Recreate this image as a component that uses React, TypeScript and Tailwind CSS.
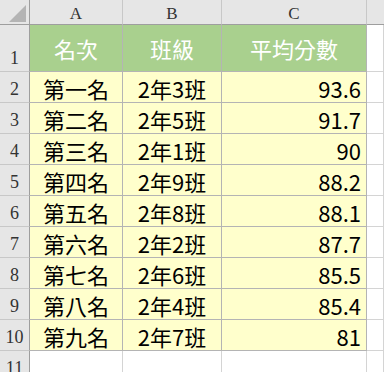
const rows = [
  { rank: "第一名", cls: "2年3班", score: "93.6" },
  { rank: "第二名", cls: "2年5班", score: "91.7" },
  { rank: "第三名", cls: "2年1班", score: "90" },
  { rank: "第四名", cls: "2年9班", score: "88.2" },
  { rank: "第五名", cls: "2年8班", score: "88.1" },
  { rank: "第六名", cls: "2年2班", score: "87.7" },
  { rank: "第七名", cls: "2年6班", score: "85.5" },
  { rank: "第八名", cls: "2年4班", score: "85.4" },
  { rank: "第九名", cls: "2年7班", score: "81" },
];

const serif = "font-['Liberation_Serif',serif]";
const cjk = "font-['Noto_Sans_CJK_TC',sans-serif]";

const colHead = `flex items-center justify-center border-r border-b border-r-[#c8c8c8] border-b-[#9e9e9e] bg-[#e6e6e6] pt-[3px] text-[17px] leading-none text-[#333] ${serif}`;
const rowHead = `flex items-end justify-center border-r border-b border-r-[#9e9e9e] border-b-[#c8c8c8] bg-[#e6e6e6] pb-[4px] text-[18px] leading-none text-[#333] ${serif}`;
const greenCell = `flex items-center justify-center border-r border-b border-[#b4b4b4] bg-[#a9d08e] text-[22px] leading-none text-white ${cjk}`;
const yellowCell = `flex items-center border-r border-b border-[#b4b4b4] bg-[#ffffcc] text-[22px] leading-none text-black ${cjk}`;
const blank = "border-r border-b border-[#d4d4d4] bg-white";

export default function App() {
  return (
    <div className="h-[372px] w-[384px] overflow-hidden bg-white">
      <div className="grid grid-cols-[30px_93px_99px_145px_1fr] grid-rows-[25px_47px_repeat(10,31px)]">
        <div className="relative border-r border-b border-r-[#9e9e9e] border-b-[#9e9e9e] bg-[#e6e6e6]">
          <svg className="absolute left-[9px] top-[5px]" width="17" height="17" viewBox="0 0 17 17">
            <polygon points="17,0 17,17 0,17" fill="#b4b4b4" />
          </svg>
        </div>
        <div className={colHead}>A</div>
        <div className={colHead}>B</div>
        <div className={colHead}>C</div>
        <div className="border-b border-b-[#9e9e9e] bg-[#e6e6e6]" />

        <div className={rowHead}>1</div>
        <div className={greenCell}>名次</div>
        <div className={greenCell}>班級</div>
        <div className={greenCell}>平均分數</div>
        <div className={blank} />

        {rows.map((row, i) => (
          <div key={row.rank} className="contents">
            <div className={rowHead}>{i + 2}</div>
            <div className={`${yellowCell} justify-center pt-[2px]`}>{row.rank}</div>
            <div className={`${yellowCell} justify-center pt-[2px]`}>{row.cls}</div>
            <div className={`${yellowCell} justify-end pr-[5px] pt-[2px]`}>{row.score}</div>
            <div className={blank} />
          </div>
        ))}

        <div className={rowHead}>11</div>
        <div className={blank} />
        <div className={blank} />
        <div className={blank} />
        <div className={blank} />
      </div>
    </div>
  );
}
